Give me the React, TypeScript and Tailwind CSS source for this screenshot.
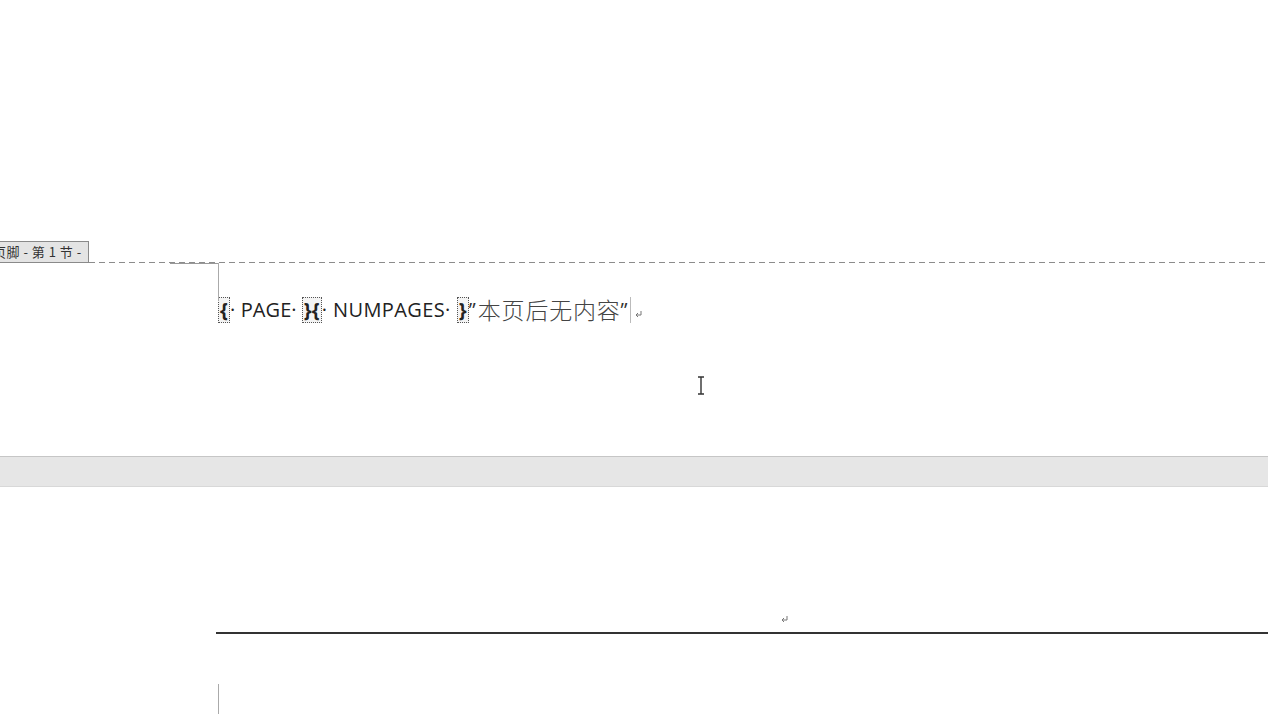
const Field = ({ children }: { children: React.ReactNode }) => (
  <span className="inline-block border border-dotted border-[#555] leading-[24px] px-[1px] bg-[#f4f4f4] font-bold">{children}</span>
)

const Cursor = () => (
  <svg width="10" height="19" viewBox="0 0 10 19" className="block">
    <path d="M2 1h6M5 1v17M2 18h6" stroke="#333" strokeWidth="1.4" fill="none" />
  </svg>
)

const Return = () => (
  <svg width="9" height="9" viewBox="0 0 9 9" className="inline-block">
    <path d="M7 1v4H2M4 3L2 5l2 2" stroke="#777" strokeWidth="1" fill="none" />
  </svg>
)

export default function App() {
  return (
    <div className="w-[1268px] h-[714px] overflow-hidden bg-white flex flex-col" style={{ fontFamily: '"Open Sans", "Noto Sans CJK SC", sans-serif' }}>
      {/* footer page area */}
      <div className="h-[241px] shrink-0" />
      <div className="flex items-end h-[22px] shrink-0">
        <div className="ml-[-11px] h-[22px] pl-[3px] pr-[6px] border border-[#8a8a8a] bg-[#e4e4e4] text-[13px] text-[#333] leading-[20px] whitespace-nowrap tracking-[0.5px]" style={{ fontFamily: '"Noto Sans CJK SC", sans-serif' }}>
          页脚 - 第 1 节 -
        </div>
        <div className="flex-1 h-px bg-[repeating-linear-gradient(90deg,#8c8c8c_0_6px,transparent_6px_10px)]" />
      </div>
      <div className="relative h-[193px] shrink-0">
        <div className="absolute left-[170px] top-0 w-[48px] border-t border-[#999]" />
        <div className="absolute left-[218px] top-0 h-[38px] border-l border-[#aaa]" />
        <div className="pl-[218px] pt-[33px] flex items-center text-[20px] text-[#222] whitespace-nowrap h-[60px] tracking-[0.1px]">
          <Field>{'{'}</Field>
          <span>· PAGE· </span>
          <span className="ml-[5px]"><Field>{'}{'}</Field></span>
          <span className="tracking-[0.4px]">· NUMPAGES· </span>
          <span className="ml-[6px]"><Field>{'}'}</Field></span>
          <span className="text-[#333]">”</span>
          <span className="text-[23px] text-[#444] font-light ml-[2px] tracking-[0.8px]" style={{ fontFamily: '"Noto Sans CJK SC", sans-serif' }}>本页后无内容</span>
          <span className="text-[#333]">”</span>
          <span className="ml-[2px] h-[26px] border-l border-[#bbb]" />
          <span className="ml-[3px] mt-[6px]"><Return /></span>
        </div>
        <div className="absolute left-[696px] top-[113px]"><Cursor /></div>
      </div>
      {/* page gap */}
      <div className="h-[31px] shrink-0 bg-[#e6e6e6] border-t border-[#c6c6c6] border-b border-b-[#d8d8d8]" />
      {/* next page header */}
      <div className="relative flex-1">
        <div className="h-[145px] flex items-end justify-start pl-[780px] pb-[8px]">
          <Return />
        </div>
        <div className="ml-[216px] border-t-2 border-[#333]" />
        <div className="ml-[218px] mt-[50px] h-[30px] border-l border-[#aaa]" />
      </div>
    </div>
  )
}
